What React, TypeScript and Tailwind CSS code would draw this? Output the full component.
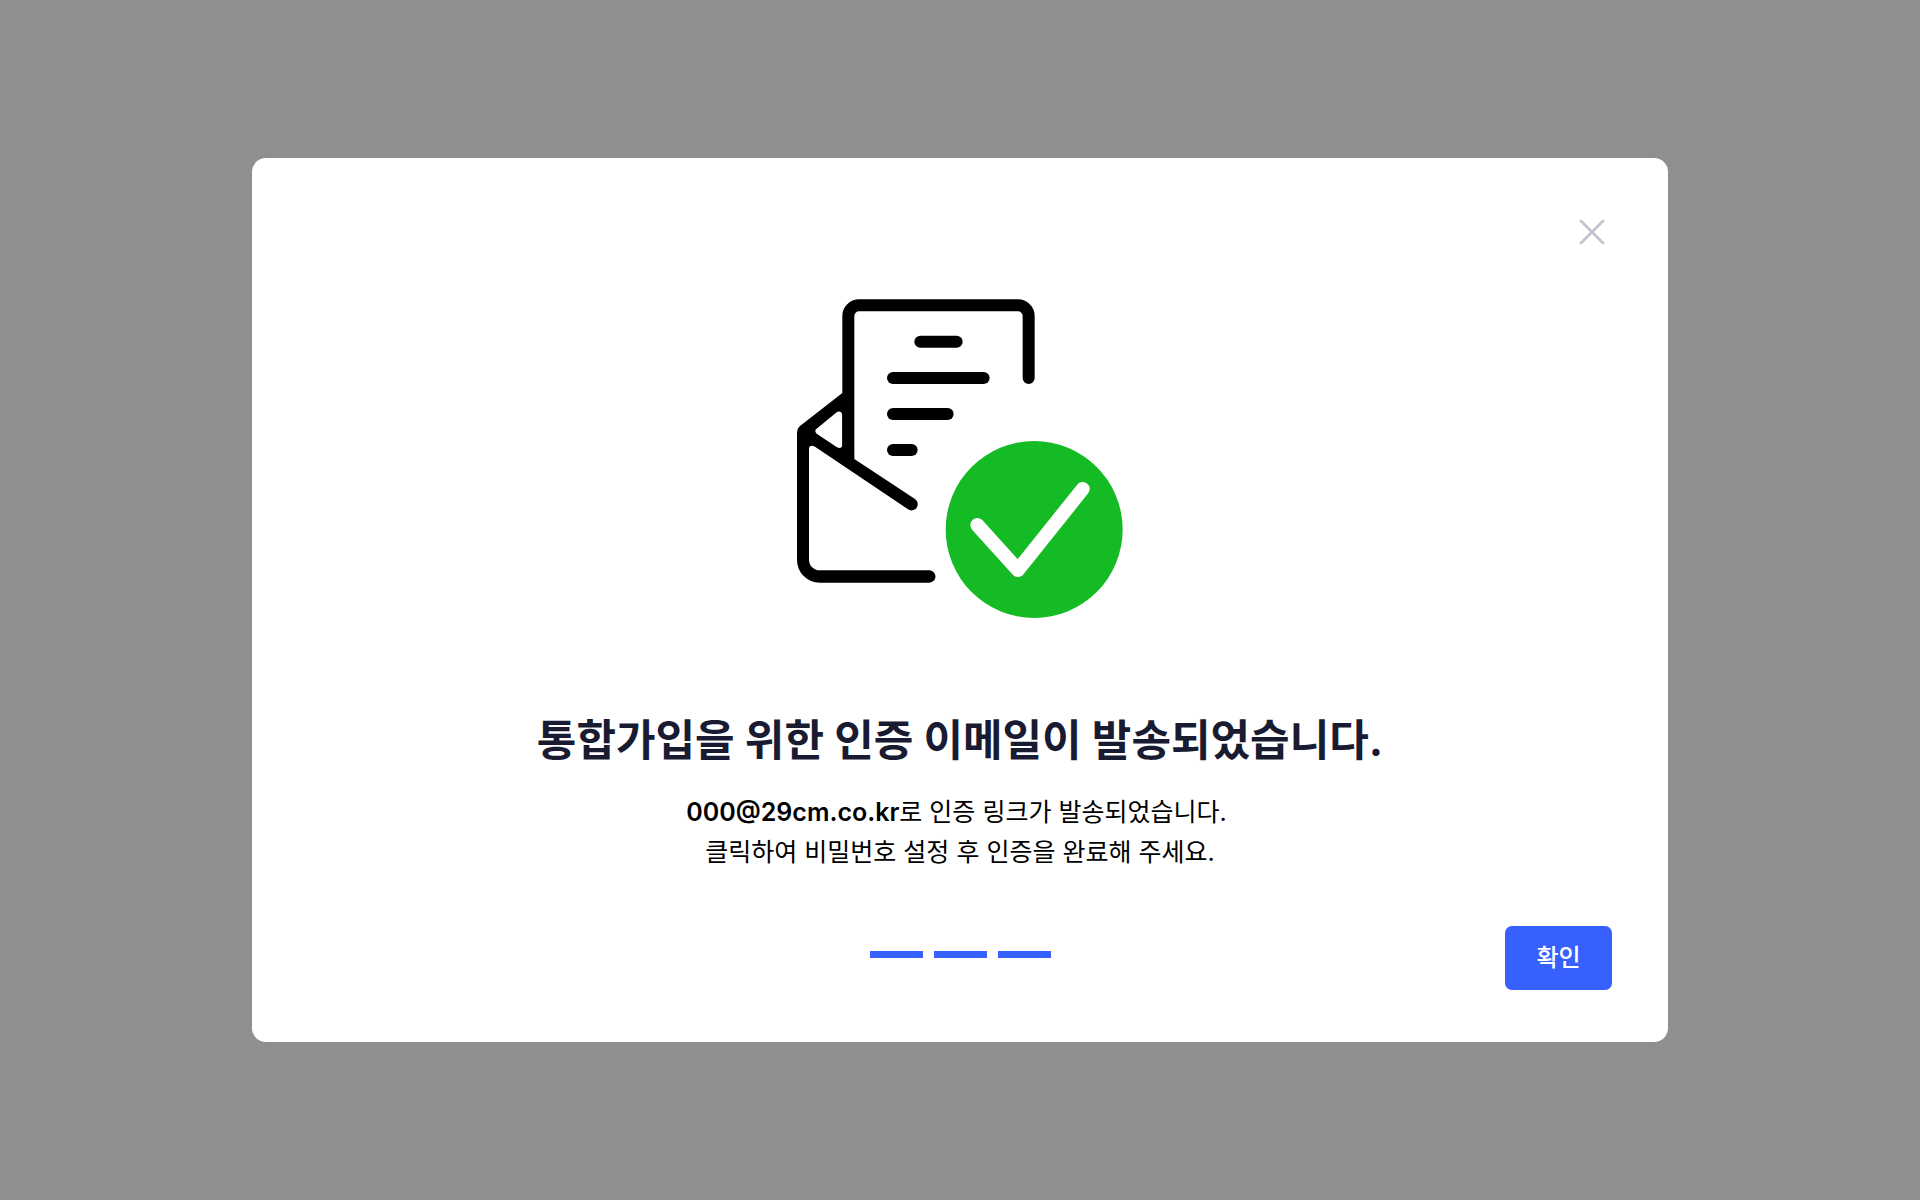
import { X } from 'lucide-react';

const TOTAL_STEPS = 3;

function MailSentIcon() {
  return (
    <svg
      viewBox="51 57 978 957"
      className="h-[319px] w-[326px]"
      fill="none"
      strokeLinecap="round"
      aria-hidden="true"
    >
      {/* Envelope */}
      <path
        fill="#000"
        fillRule="evenodd"
        d="M187 339 L59 439 Q51 446 51 458 V840 A68 68 0 0 0 119 908 H448 A18.5 18.5 0 0 0 448 871 H119 A32 32 0 0 1 87 839 V507 Q87 497 96 497 Q100 497 105 500 L384 688 A18 18 0 0 0 405 657 L223 537 V518 H205 V339 Z M108 448 Q103 454 110 461 L171 502 Q187 508 187 492 V405 Q184 391 171 396 Z"
      />
      {/* Letter */}
      <g stroke="#000" strokeWidth="36">
        <path d="M746 294 V108 A32 32 0 0 0 714 76 H237 A32 32 0 0 0 205 108 V518" />
        <path d="M421 185 H530" />
        <path d="M339 294 H611" />
        <path d="M339 402 H503" />
        <path d="M339 510 H395" />
      </g>
      {/* Check badge */}
      <circle cx="762.5" cy="748.5" r="265.5" fill="#14bb24" />
      <path
        d="M592 735 L714 870 L908 627"
        stroke="#fff"
        strokeWidth="42"
        strokeLinejoin="round"
      />
    </svg>
  );
}

function StepIndicator() {
  return (
    <div className="flex gap-[11px] pt-[25px]">
      {Array.from({ length: TOTAL_STEPS }).map((_, index) => (
        <span key={index} className="h-[7px] w-[53px] bg-[#3860ff]" />
      ))}
    </div>
  );
}

export default function App() {
  return (
    <div className="flex min-h-screen items-center justify-center bg-[#8f8f91] p-6 font-['Inter','Noto_Sans_CJK_KR',sans-serif]">
      <section
        role="dialog"
        aria-labelledby="dialog-title"
        className="flex w-full max-w-[1416px] flex-col rounded-[14px] bg-white px-14 pt-[54px] pb-[52px]"
      >
        {/* Header */}
        <div className="flex justify-end">
          <button
            type="button"
            aria-label="닫기"
            className="flex size-10 items-center justify-center text-[#c4c4d0]"
          >
            <X className="size-11 shrink-0" strokeWidth={1.5} />
          </button>
        </div>

        {/* Content */}
        <div className="mt-[47px] flex flex-col items-center text-center">
          <MailSentIcon />
          <h1
            id="dialog-title"
            className="mt-[92px] text-[43px] leading-[60px] font-bold text-[#181b31]"
          >
            통합가입을 위한 인증 이메일이 발송되었습니다.
          </h1>
          <p className="mt-[22px] text-[25px] leading-10 text-black">
            <strong className="font-semibold">000@29cm.co.kr</strong>로 인증 링크가 발송되었습니다.&nbsp;
            <br />
            클릭하여 비밀번호 설정 후 인증을 완료해 주세요.
          </p>
        </div>

        {/* Footer */}
        <div className="mt-[54px] grid grid-cols-[1fr_auto_1fr] items-start">
          <div />
          <StepIndicator />
          <button
            type="button"
            className="h-16 w-[107px] justify-self-end rounded-[7px] bg-[#3860ff] text-2xl font-medium text-white"
          >
            확인
          </button>
        </div>
      </section>
    </div>
  );
}
